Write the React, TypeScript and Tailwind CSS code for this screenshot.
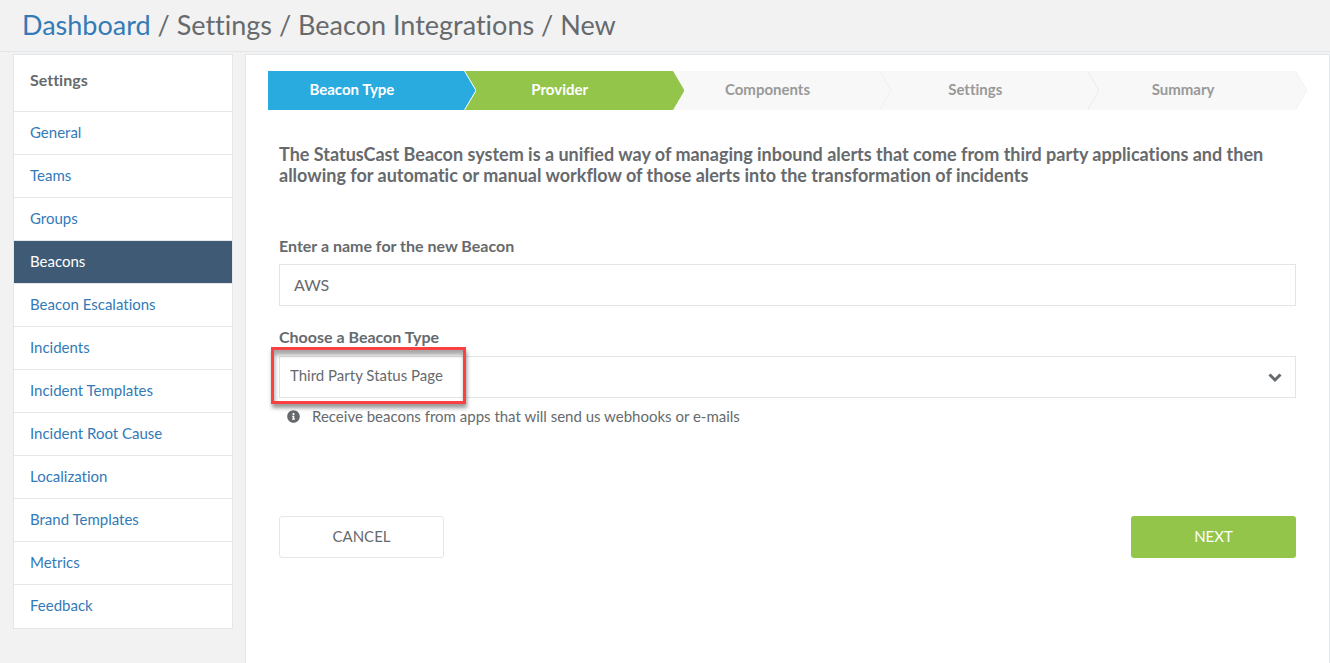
import { useState } from "react";
import { FaInfoCircle } from "react-icons/fa";

const menuItems = [
  "General",
  "Teams",
  "Groups",
  "Beacons",
  "Beacon Escalations",
  "Incidents",
  "Incident Templates",
  "Incident Root Cause",
  "Localization",
  "Brand Templates",
  "Metrics",
  "Feedback",
];

const steps = [
  { label: "Beacon Type", box: "bg-[#29abe0] text-white", fill: "#29abe0", next: "#93c54b", line: "#ffffff" },
  { label: "Provider", box: "bg-[#93c54b] text-white", fill: "#93c54b", next: "#f8f8f8", line: "#93c54b" },
  { label: "Components", box: "bg-[#f8f8f8] text-[#999999]", fill: "#f8f8f8", next: "#f8f8f8", line: "#efefef" },
  { label: "Settings", box: "bg-[#f8f8f8] text-[#999999]", fill: "#f8f8f8", next: "#f8f8f8", line: "#ebebeb" },
  { label: "Summary", box: "bg-[#f8f8f8] text-[#999999]", fill: "#f8f8f8", next: "#ffffff", line: "#f3f3f3" },
];

function Sidebar() {
  return (
    <nav className="w-[220px] shrink-0 border border-[#e4e7ea] bg-white">
      <h2 className="h-14 px-4 pt-[15px] text-[16px] leading-5 font-bold">Settings</h2>
      <ul className="pb-px">
        {menuItems.map((item) => (
          <li key={item} className="border-t border-[#e4e7ea]">
            <a
              href="#"
              className={
                item === "Beacons"
                  ? "-mb-px block h-[43px] bg-[#3e5a75] px-4 text-[15px] leading-10 text-white"
                  : "block h-[42px] px-4 text-[15px] leading-10 text-[#337ab7]"
              }
            >
              {item}
            </a>
          </li>
        ))}
      </ul>
    </nav>
  );
}

function Steps() {
  return (
    <ol className="grid grid-cols-5">
      {steps.map((step) => (
        <li key={step.label} className="flex h-[39px]">
          <button className={`flex-1 pr-7 pb-0.5 text-[15px] font-bold ${step.box}`}>{step.label}</button>
          <svg className="h-full w-3 shrink-0" viewBox="0 0 12 39" preserveAspectRatio="none">
            <rect width="12" height="39" fill={step.next} />
            <path d="M-1 0H0.5L12 19.5L0.5 39H-1Z" fill={step.fill} />
            <path d="M0.5 0L12 19.5L0.5 39" fill="none" stroke={step.line} />
          </svg>
        </li>
      ))}
    </ol>
  );
}

export default function App() {
  const [name, setName] = useState("AWS");

  return (
    <div className="flex min-h-screen flex-col bg-[#f2f2f2] font-['Lato','Open_Sans',sans-serif] text-[#666a6d] [font-variant-ligatures:none]">
      <header className="h-[52px] border-b border-[#e4e7ea] px-[22px]">
        <h1 className="text-[27px] leading-[49px]">
          <a href="#" className="text-[#337ab7]">
            Dashboard
          </a>{" "}
          / Settings / Beacon Integrations / New
        </h1>
      </header>

      <div className="mt-0.5 flex flex-1 items-start gap-3 pl-[13px]">
        <Sidebar />

        <main className="flex-1 self-stretch border border-b-0 border-[#e4e7ea] bg-white px-[22px] pt-4">
          <Steps />

          <form className="mr-[11px] ml-[11px]" onSubmit={(e) => e.preventDefault()}>
            <p className="mt-[34px] text-[18px] leading-[21px] font-bold">
              The StatusCast Beacon system is a unified way of managing inbound alerts that come from third party
              applications and then allowing for automatic or manual workflow of those alerts into the transformation
              of incidents
            </p>

            <label htmlFor="name" className="mt-[50px] block text-[16px] leading-5 font-bold">
              Enter a name for the new Beacon
            </label>
            <input
              id="name"
              value={name}
              onChange={(e) => setName(e.target.value)}
              className="mt-2 block h-[42px] w-full border border-[#e2e4e6] px-3.5 pb-0.5 text-[16px]"
            />

            <label htmlFor="type" className="mt-[21px] block text-[16px] leading-5 font-bold">
              Choose a Beacon Type
            </label>
            <div className="relative mt-[9px]">
              <select
                id="type"
                className="block h-[42px] w-full appearance-none border border-[#e2e4e6] bg-white px-2.5 pb-1 text-[15px]"
              >
                <option>Third Party Status Page</option>
              </select>
              <svg
                className="pointer-events-none absolute top-[17px] right-3.5 h-[10px] w-[14px]"
                viewBox="0 0 14 10"
                fill="none"
                stroke="currentColor"
                strokeWidth="3"
              >
                <path d="M1.5 1.5L7 7L12.5 1.5" />
              </svg>
              {/* highlight over the selected type */}
              <div className="pointer-events-none absolute -top-[9px] -left-2 h-[57px] w-[195px] border-3 border-[#f94144] shadow-[1px_4px_4px_rgba(0,0,0,0.4),inset_1px_5px_4px_rgba(0,0,0,0.35)]" />
            </div>

            <p className="mt-[7px] flex items-center gap-3 pl-2 text-[15px] leading-[22px]">
              <FaInfoCircle className="size-[13px]" />
              Receive beacons from apps that will send us webhooks or e-mails
            </p>

            <div className="mt-[89px] flex justify-between">
              <button
                type="button"
                className="h-[42px] w-[165px] rounded-[3px] border border-[#e4e7ea] pb-0.5 text-[15px]"
              >
                CANCEL
              </button>
              <button
                type="submit"
                className="h-[42px] w-[165px] rounded-[3px] bg-[#93c54b] pb-0.5 text-[15px] text-white"
              >
                NEXT
              </button>
            </div>
          </form>
        </main>
      </div>
    </div>
  );
}
